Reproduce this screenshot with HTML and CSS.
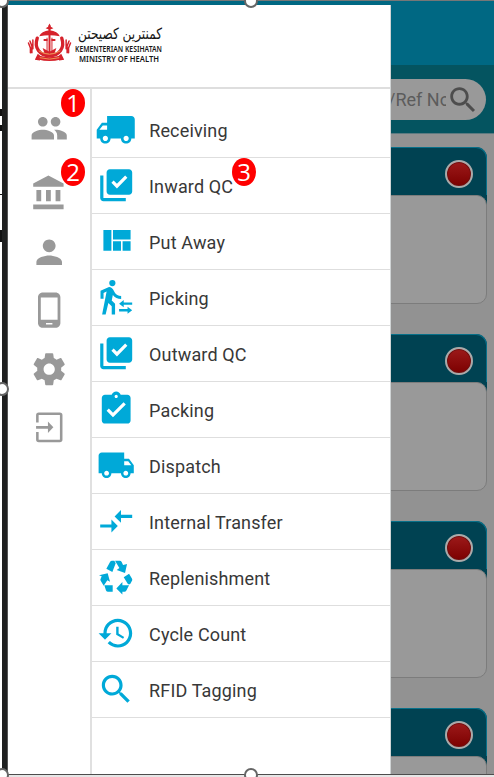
FILE: index.html
```html
<!DOCTYPE html>
<html lang="en">
<head>
<meta charset="utf-8">
<title>Warehouse menu</title>
<link rel="stylesheet" href="styles.css">
</head>
<body>
<div class="frame">
  <div class="edge"><i class="mark m1"></i><i class="mark m2"></i><i class="mark m3"></i><i class="mark m4"></i></div>
  <div class="bezel"></div>
  <div class="screen">
    <main class="app">
      <div class="topbar"></div>
      <div class="searchbar">
        <div class="pill"><span class="hint">/Ref No</span>
          <svg class="icon" viewBox="0 0 24 24"><path d="M15.5 14h-.79l-.28-.27C15.41 12.59 16 11.11 16 9.5 16 5.91 13.09 3 9.5 3S3 5.91 3 9.5 5.91 16 9.5 16c1.61 0 3.09-.59 4.23-1.57l.27.28v.79l5 4.99L20.49 19l-4.99-5zm-6 0C7.01 14 5 11.99 5 9.5S7.01 5 9.5 5 14 7.01 14 9.5 11.99 14 9.5 14z"/></svg>
        </div>
      </div>
      <div class="cards">
        <article class="card"><header><b class="dot"></b></header><div class="body"></div></article>
        <article class="card"><header><b class="dot"></b></header><div class="body"></div></article>
        <article class="card"><header><b class="dot"></b></header><div class="body"></div></article>
        <article class="card"><header><b class="dot"></b></header><div class="body"></div></article>
      </div>
    </main>
    <aside class="drawer">
      <header class="brand">
        <svg class="crest" viewBox="0 0 46 40">
          <g fill="none" stroke="#d6222b" stroke-linecap="round">
            <path d="M10.500 15C7 25 13 33 23 33S39 25 35.500 15" stroke-width="3.400"/>
            <path d="M23 3v29" stroke-width="2"/>
            <path d="M20.500 15v15M25.500 15v15" stroke-width="1"/>
            <path d="M3 18l2 5v7M1.500 20l2 5v5M6 17v9M43 18l-2 5v7M44.500 20l-2 5v5M40 17v9" stroke-width="1.500"/>
            <path d="M12 35q11 3 22 0" stroke-width="4"/>
          </g>
          <g fill="#d6222b">
            <path d="M12.500 13q2-5 10.500-6 8.500 1 10.500 6-10.500-2-21 0zM19 5l4-2.500L27 5l-4 1.500zM8 37l3-6 5 4-3 3zM38 37l-3-6-5 4 3 3zM17 16h4v2h-4zM25 16h4v2h-4zM23 0l1.500 3h-3zM16 25l7 4 7-4-2 6H18z"/>
          </g>
          <path d="M12 28q11 7 22 0M13 35q10 3 20 0" fill="none" stroke="#ef9a54" stroke-width="1"/>
        </svg>
        <svg class="wordmark" viewBox="0 0 92 44">
          <text class="jawi" x="47" y="15.500" text-anchor="middle" textLength="84" lengthAdjust="spacingAndGlyphs">کمنترين کصيحتن</text>
          <text class="latin" x="2" y="28.500" textLength="87" lengthAdjust="spacingAndGlyphs">KEMENTERIAN KESIHATAN</text>
          <text class="latin" x="6" y="39" textLength="80" lengthAdjust="spacingAndGlyphs">MINISTRY OF HEALTH</text>
        </svg>
      </header>
      <div class="panes">
        <nav class="rail">
          <a class="first"><svg class="icon" viewBox="0 0 24 24"><path d="M16 11c1.660 0 2.990-1.340 2.990-3S17.660 5 16 5s-3 1.340-3 3 1.340 3 3 3zm-8 0c1.660 0 2.990-1.340 2.990-3S9.660 5 8 5 5 6.340 5 8s1.340 3 3 3zm0 2c-2.330 0-7 1.170-7 3.500V19h14v-2.500C15 14.170 10.330 13 8 13zm8 0c-.29 0-.62.02-.97.05 1.160.84 1.970 1.970 1.970 3.450V19h6v-2.500c0-2.330-4.670-3.500-7-3.500z"/></svg><b class="badge">1</b></a>
          <a><svg class="icon" viewBox="0 0 24 24"><path d="M4 10v7h3v-7H4zm6 0v7h3v-7h-3zM2 22h19v-3H2v3zm14-12v7h3v-7h-3zm-4.500-9L2 6v2h19V6l-9.500-5z"/></svg><b class="badge">2</b></a>
          <a><svg class="icon" viewBox="0 0 24 24"><path d="M12 12c2.210 0 4-1.790 4-4s-1.790-4-4-4-4 1.790-4 4 1.790 4 4 4zm0 2c-2.670 0-8 1.340-8 4v2h16v-2c0-2.660-5.330-4-8-4z"/></svg></a>
          <a><svg class="icon" viewBox="0 0 24 24"><path d="M16 1H8C6.340 1 5 2.340 5 4v16c0 1.660 1.340 3 3 3h8c1.660 0 3-1.340 3-3V4c0-1.660-1.340-3-3-3zm-2 20h-4v-1h4v1zm3.250-3H6.750V4h10.500v14z"/></svg></a>
          <a><svg class="icon" viewBox="0 0 24 24"><path d="M19.430 12.980c.04-.32.07-.64.07-.98s-.03-.66-.07-.98l2.110-1.650c.19-.15.24-.42.12-.64l-2-3.460c-.12-.22-.39-.3-.61-.22l-2.490 1c-.52-.4-1.080-.73-1.690-.98l-.38-2.650C14.460 2.180 14.250 2 14 2h-4c-.25 0-.46.18-.49.42l-.38 2.650c-.61.25-1.170.59-1.690.98l-2.490-1c-.23-.09-.49 0-.61.22l-2 3.460c-.13.22-.07.49.12.64l2.110 1.650c-.04.32-.07.65-.07.98s.03.66.07.98l-2.110 1.650c-.19.15-.24.42-.12.64l2 3.460c.12.22.39.3.61.22l2.490-1c.52.4 1.080.73 1.690.98l.38 2.650c.03.24.24.42.49.42h4c.25 0 .46-.18.49-.42l.38-2.650c.61-.25 1.170-.59 1.690-.98l2.490 1c.23.09.49 0 .61-.22l2-3.460c.12-.22.07-.49-.12-.64l-2.110-1.650zM12 15.500c-1.930 0-3.500-1.570-3.500-3.500s1.570-3.500 3.500-3.500 3.500 1.570 3.500 3.500-1.570 3.500-3.500 3.500z"/></svg></a>
          <a><svg class="icon" viewBox="0 0 24 24"><path d="M4.600 9V4.500q0-.9.900-.9h13.100q.9 0 .9.900v15.200q0 .9-.9.9H5.500q-.9 0-.9-.9V15M3.800 12.100H12" fill="none" stroke="currentColor" stroke-width="1.600"/><path d="M11.200 8.500l3.400 3.600-3.400 3.600z"/></svg></a>
        </nav>
        <ul class="menu">
          <li><svg class="icon big" viewBox="0 0 24 24"><path transform="matrix(-1 0 0 1 24 0)" d="M20 8h-3V4H3c-1.100 0-2 .9-2 2v11h2c0 1.660 1.340 3 3 3s3-1.340 3-3h6c0 1.660 1.340 3 3 3s3-1.340 3-3h2v-5l-3-4zM6 18.500c-.83 0-1.500-.67-1.500-1.500s.67-1.500 1.500-1.500 1.500.67 1.500 1.500-.67 1.500-1.500 1.500zm13.500-9l1.960 2.500H17V9.500h2.500zm-1.500 9c-.83 0-1.500-.67-1.500-1.500s.67-1.500 1.500-1.500 1.500.67 1.500 1.500-.67 1.500-1.500 1.500z"/></svg><span>Receiving</span></li>
          <li><svg class="icon" viewBox="0 0 24 24"><path d="M20 2H8c-1.100 0-2 .9-2 2v12c0 1.100.9 2 2 2h12c1.100 0 2-.9 2-2V4c0-1.100-.9-2-2-2zm-7.530 12L9 10.500l1.400-1.410 2.070 2.080L17.600 6 19 7.410 12.470 14zM4 6H2v14c0 1.100.9 2 2 2h14v-2H4V6z"/></svg><span>Inward QC</span><b class="badge">3</b></li>
          <li><svg class="icon" viewBox="0 0 24 24"><path d="M10 18h5v-6h-5v6zm-6 0h5V5H4v13zm12 0h5v-6h-5v6zM10 5v6h11V5H10z"/></svg><span>Put Away</span></li>
          <li><svg class="icon" viewBox="0 0 24 24"><circle cx="9.600" cy="3.200" r="1.950"/><path d="M7.500 5.600L2.200 8v5h1.900V9.300l1.900-.8L3.200 22.800h2.200l1.700-7.200 2.100 2v5.200h2.100v-6.700l-2.100-2.100.7-3.300c1.200 1.500 3 2.500 5.200 2.500v-2c-1.800 0-3.200-.9-4-2.200L10 7.100c-.6-1-1.500-1.600-2.500-1.500zM13.800 16.100l2.900-2.300v1.500H22v1.500h-5.300v1.500zM22 20.100l-2.900 2.300v-1.500h-5.300v-1.500h5.300v-1.500z"/></svg><span>Picking</span></li>
          <li><svg class="icon" viewBox="0 0 24 24"><path d="M20 2H8c-1.100 0-2 .9-2 2v12c0 1.100.9 2 2 2h12c1.100 0 2-.9 2-2V4c0-1.100-.9-2-2-2zm-7.530 12L9 10.500l1.400-1.410 2.070 2.080L17.600 6 19 7.410 12.470 14zM4 6H2v14c0 1.100.9 2 2 2h14v-2H4V6z"/></svg><span>Outward QC</span></li>
          <li><svg class="icon" viewBox="0 0 24 24"><path d="M19 3h-4.180C14.400 1.840 13.300 1 12 1c-1.300 0-2.400.84-2.820 2H5c-1.100 0-2 .9-2 2v14c0 1.100.9 2 2 2h14c1.100 0 2-.9 2-2V5c0-1.100-.9-2-2-2zm-7 0c.55 0 1 .45 1 1s-.45 1-1 1-1-.45-1-1 .45-1 1-1zm-2 14l-4-4 1.410-1.410L10 14.170l6.590-6.590L18 9l-8 8z"/></svg><span>Packing</span></li>
          <li><svg class="icon" viewBox="0 0 24 24"><path d="M20 8h-3V4H3c-1.100 0-2 .9-2 2v11h2c0 1.660 1.340 3 3 3s3-1.340 3-3h6c0 1.660 1.340 3 3 3s3-1.340 3-3h2v-5l-3-4zM6 18.500c-.83 0-1.500-.67-1.500-1.500s.67-1.500 1.500-1.500 1.500.67 1.500 1.500-.67 1.500-1.500 1.500zm13.500-9l1.960 2.500H17V9.500h2.500zm-1.500 9c-.83 0-1.500-.67-1.500-1.500s.67-1.500 1.500-1.500 1.500.67 1.500 1.500-.67 1.500-1.500 1.500z"/></svg><span>Dispatch</span></li>
          <li><svg class="icon" viewBox="0 0 24 24"><path d="M9.010 14H2v2h7.010v3L13 15l-3.990-4v3zm5.980-1v-3H22V8h-7.010V5L11 9l3.990 4z"/></svg><span>Internal Transfer</span></li>
          <li><svg class="icon" viewBox="21 370 115 115"><path d="M49 402L60 382Q62 378 66 378H73L77 386L67 412ZM75 378H89Q93 378 95 382L99 391L111 388L105 415L80 406L88 400ZM27 422L53 416L60 441L52 437L41 453L32 438Q30 435 32 432L35 425ZM43 452H68V471H54Q50 471 48 467ZM79 461L97 442V452H117L109 467Q107 471 103 471H97V479ZM101 428L117 417L126 432Q128 436 125 440L120 449H114Z"/></svg><span>Replenishment</span></li>
          <li><svg class="icon" viewBox="0 0 24 24"><path d="M13 3c-4.970 0-9 4.030-9 9H1l3.890 3.890.07.14L9 12H6c0-3.870 3.130-7 7-7s7 3.130 7 7-3.130 7-7 7c-1.930 0-3.680-.79-4.940-2.060l-1.420 1.420C8.270 19.990 10.510 21 13 21c4.970 0 9-4.030 9-9s-4.030-9-9-9zm-1 5v5l4.280 2.540.72-1.210-3.500-2.080V8H12z"/></svg><span>Cycle Count</span></li>
          <li><svg class="icon" viewBox="0 0 24 24"><path d="M15.500 14h-.79l-.28-.27C15.410 12.590 16 11.110 16 9.500 16 5.910 13.090 3 9.500 3S3 5.910 3 9.500 5.910 16 9.500 16c1.610 0 3.090-.59 4.230-1.570l.27.28v.79l5 4.990L20.490 19l-4.990-5zm-6 0C7.010 14 5 11.990 5 9.500S7.010 5 9.500 5 14 7.010 14 9.500 11.990 14 9.500 14z"/></svg><span>RFID Tagging</span></li>
        </ul>
      </div>
    </aside>
  </div>
  <i class="handle top left"></i><i class="handle top mid"></i><i class="handle side"></i><i class="handle bottom left"></i><i class="handle bottom mid"></i>
</div>
</body>
</html>
```
FILE: styles.css
```css
* { box-sizing: border-box; }
body { margin: 0; font-family: Roboto, "Liberation Sans", sans-serif; }
.frame { position: relative; display: grid; grid-template-columns: 2px 6px 486px; width: 494px; height: 777px; overflow: hidden; background: #e6e6e6; }
.edge { background: #fff; height: 774px; }
.mark { display: block; width: 2px; background: #111; }
.m1 { height: 7px; margin-top: 109px; }
.m2 { height: 6px; margin-top: 9px; }
.m3 { height: 1px; margin-top: 63px; }
.m4 { height: 12px; margin-top: 35px; }
.bezel { background: #1f2020; height: 774px; border-right: 1px solid #555; }
.screen { position: relative; height: 775px; overflow: hidden; border-top: 1px solid #777; border-bottom: 1px solid #4d4d4d; background: #929292; }

.topbar { height: 64px; background: #006883; }
.searchbar { height: 69px; padding: 14px 8px 0 0; background: #045460; border-bottom: 1px solid #5c7a80; }
.pill { display: flex; align-items: center; justify-content: flex-end; height: 41px; padding-right: 6px; border-radius: 21px; background: #999; color: #4d4d4d; }
.hint { width: 58px; overflow: hidden; white-space: nowrap; font-size: 18px; color: #5c5c5c; }
.pill .icon { width: 34px; height: 34px; }
.cards { display: grid; gap: 30px; padding: 13px 7px 0 8px; }
.card { height: 157px; border-radius: 11px; background: linear-gradient(#004252 0 70px, transparent 70px); }
.card header { display: flex; justify-content: flex-end; align-items: center; height: 48px; padding: 5px 13px 0 0; border-radius: 11px 11px 0 0; border-top: 1px solid #087089; border-right: 1px solid #087089; }
.dot { width: 28px; height: 28px; border: 2.500px solid #aaa; border-radius: 50%; background: linear-gradient(#9c1a1a, #7c0000); box-shadow: inset 0 0 0 1px #701010; }
.card .body { height: 109px; border: 1px solid #7c7c7c; border-radius: 10px; background: #999; }

.drawer { position: absolute; left: 0; top: 4px; width: 383px; height: 770px; background: #fff; border-right: 1px solid #d0d4d5; }
.brand { display: flex; height: 84px; padding: 18px 0 0 19px; border-bottom: 2px solid #dedede; }
.crest { width: 45px; height: 40px; }
.wordmark { width: 92px; height: 44px; margin-left: 1px; overflow: visible; }
.wordmark text { fill: #161616; }
.jawi { font: 15.500px "DejaVu Sans", sans-serif; }
.latin { font: 600 8px "Noto Sans", sans-serif; }
.panes { display: grid; grid-template-columns: 84px 1fr; height: 686px; }
.rail { border-right: 2px solid #e0e0e0; color: #999; }
.rail a { position: relative; display: flex; align-items: center; justify-content: center; height: 58.600px; }
.rail .first { height: 75px; padding-top: 3px; }
.icon { width: 38.400px; height: 38.400px; flex: none; fill: currentColor; }
.icon.big { width: 41.500px; height: 41.500px; margin: 0 -1.500px; }
.menu { margin: 0; padding: 13px 0 0; list-style: none; color: #00a9d8; }
.menu li { position: relative; display: flex; align-items: center; gap: 14px; height: 56px; padding-left: 4.700px; border-bottom: 1px solid #dedede; }
.menu span { color: #383838; font-size: 18px; letter-spacing: .15px; padding-top: 1px; }
.badge { position: absolute; display: flex; align-items: center; justify-content: center; width: 24px; height: 28px; border-radius: 50%; background: red; color: #fff; font: 24px/28px "Open Sans", sans-serif; }
.rail .badge { left: 53px; top: 0; }
.rail a:nth-child(2) .badge { top: -6px; }
.menu .badge { left: 140px; top: 0; }

.handle { position: absolute; width: 14px; height: 14px; border: 2.500px solid #666; border-radius: 50%; background: #fff; }
.left, .side { left: -5px; }
.mid { left: 244px; }
.top { top: -6px; }
.side { top: 382px; }
.bottom { top: 768px; }
```
